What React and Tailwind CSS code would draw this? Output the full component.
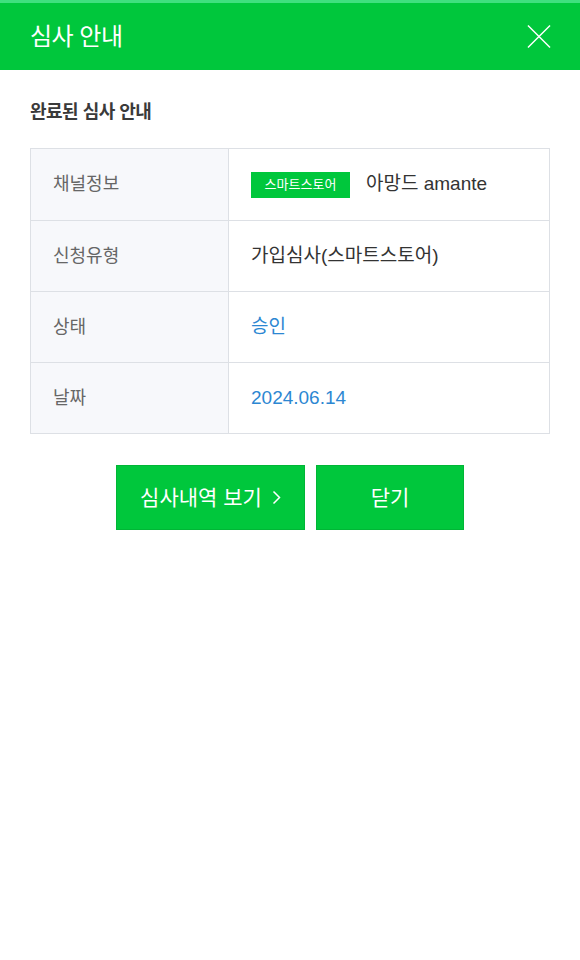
const rows = [
  { label: '채널정보', type: 'channel' },
  { label: '신청유형', value: '가입심사(스마트스토어)' },
  { label: '상태', value: '승인', blue: true },
  { label: '날짜', value: '2024.06.14', blue: true },
];

const App = () => {
  return (
    <div
      className="min-h-screen w-[580px] bg-white"
      style={{ fontFamily: '"Liberation Sans", "Noto Sans CJK KR", sans-serif' }}
    >
      <div className="h-[3px] bg-[#3fe07e]" />
      <header className="flex h-[67px] items-center justify-between bg-[#00c73c] pl-[30px] pr-[29px]">
        <h1 className="text-[24px] font-normal tracking-[-0.5px] text-white">심사 안내</h1>
        <button type="button" aria-label="닫기" className="flex h-6 w-6 items-center justify-center">
          <svg width="25" height="25" viewBox="0 0 25 25" fill="none" stroke="#ffffff" strokeWidth="1.5">
            <path d="M1 1L24 24M24 1L1 24" />
          </svg>
        </button>
      </header>

      <main className="px-[30px] pt-[29px]">
        <h2 className="text-[18px] font-bold leading-[26px] tracking-[-0.5px] text-[#3a3a3a]">완료된 심사 안내</h2>

        <div className="mt-[23px] border border-[#dde0e5]">
          {rows.map((row, index) => (
            <div
              key={row.label}
              className={`grid h-[71px] grid-cols-[198px_1fr] ${index > 0 ? 'border-t border-[#dde0e5]' : ''}`}
            >
              <div className="flex items-center border-r border-[#dde0e5] bg-[#f7f8fb] pl-[22px] text-[18px] text-[#666]">
                {row.label}
              </div>
              <div className="flex items-center pl-[22px] text-[19px]">
                {row.type === 'channel' ? (
                  <>
                    <span className="flex h-[26px] w-[99px] items-center justify-center bg-[#00c73c] text-[13px] text-white">
                      스마트스토어
                    </span>
                    <span className="ml-[16px] text-[#333]">아망드 amante</span>
                  </>
                ) : (
                  <span className={row.blue ? 'text-[#2c87d2]' : 'text-[#333]'}>{row.value}</span>
                )}
              </div>
            </div>
          ))}
        </div>

        <div className="mt-[31px] flex justify-center gap-[11px]">
          <button
            type="button"
            className="flex h-[65px] w-[189px] items-center justify-center gap-[10px] border border-[#00b636] bg-[#00c73c] text-[21px] text-white"
          >
            심사내역 보기
            <svg width="9" height="15" viewBox="0 0 9 15" fill="none" stroke="#ffffff" strokeWidth="1.5">
              <path d="M1.5 1.5L7.5 7.5L1.5 13.5" />
            </svg>
          </button>
          <button
            type="button"
            className="flex h-[65px] w-[148px] items-center justify-center border border-[#00b636] bg-[#00c73c] text-[21px] text-white"
          >
            닫기
          </button>
        </div>
      </main>
    </div>
  );
};

export default App;
